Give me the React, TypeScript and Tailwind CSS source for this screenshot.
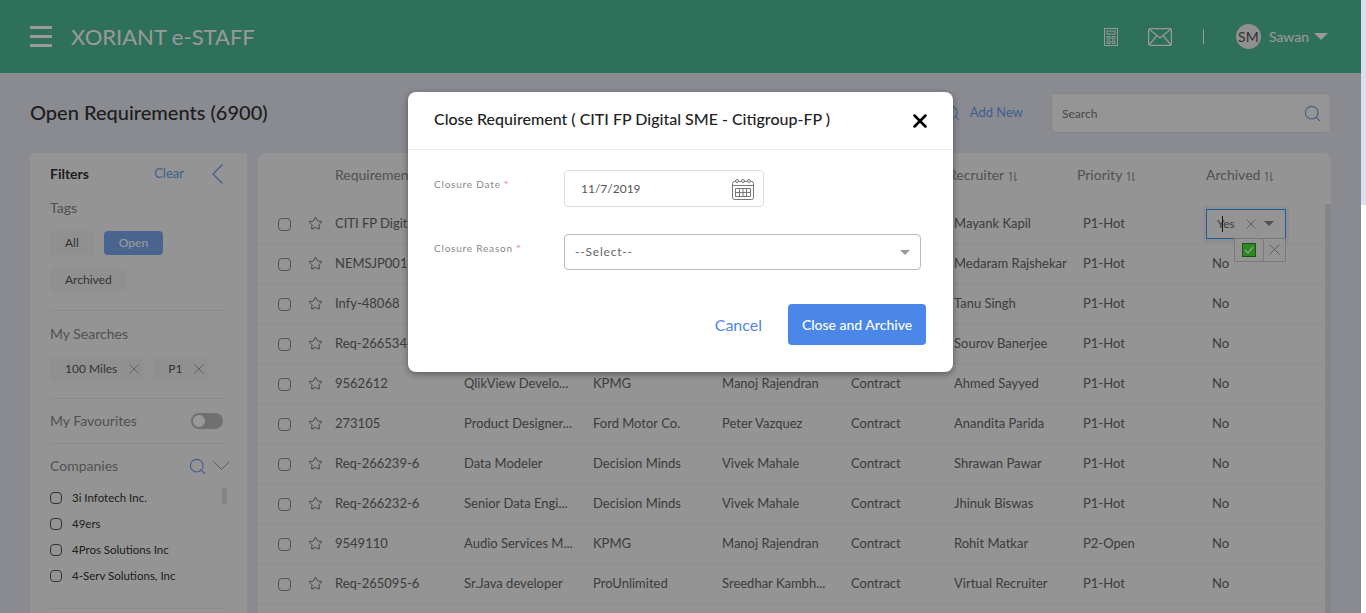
import { Search, X, Star } from "lucide-react";

const rows = [
  ["CITI FP Digital SME", "", "", "", "", "Mayank Kapil", "P1-Hot", "Yes"],
  ["NEMSJP001", "", "", "", "", "Medaram Rajshekar", "P1-Hot", "No"],
  ["Infy-48068", "", "", "", "", "Tanu Singh", "P1-Hot", "No"],
  ["Req-266534", "", "", "", "", "Sourov Banerjee", "P1-Hot", "No"],
  ["9562612", "QlikView Develo...", "KPMG", "Manoj Rajendran", "Contract", "Ahmed Sayyed", "P1-Hot", "No"],
  ["273105", "Product Designer...", "Ford Motor Co.", "Peter Vazquez", "Contract", "Anandita Parida", "P1-Hot", "No"],
  ["Req-266239-6", "Data Modeler", "Decision Minds", "Vivek Mahale", "Contract", "Shrawan Pawar", "P1-Hot", "No"],
  ["Req-266232-6", "Senior Data Engi...", "Decision Minds", "Vivek Mahale", "Contract", "Jhinuk Biswas", "P1-Hot", "No"],
  ["9549110", "Audio Services M...", "KPMG", "Manoj Rajendran", "Contract", "Rohit Matkar", "P2-Open", "No"],
  ["Req-265095-6", "Sr.Java developer", "ProUnlimited", "Sreedhar Kambh...", "Contract", "Virtual Recruiter", "P1-Hot", "No"],
];

const companies = ["3i Infotech Inc.", "49ers", "4Pros Solutions Inc", "4-Serv Solutions, Inc"];

const SortIcon = () => (
  <svg width="10" height="11" viewBox="0 0 10 11" fill="none" stroke="currentColor" strokeWidth="1" className="inline-block ml-1">
    <path d="M3 10V1L1 3M7 1v9l2-2" />
  </svg>
);

const Chip = ({ label, active }: { label: string; active?: boolean }) => (
  <span className={`h-6 px-[15px] rounded text-xs flex items-center ${active ? "bg-[#7ba7ee] text-white font-medium" : "bg-[#f0f0f0] text-[#555]"}`}>
    {label}
  </span>
);

const SearchChip = ({ label }: { label: string }) => (
  <span className="h-6 pl-[15px] pr-[4px] rounded bg-[#f0f0f0] text-[#555] text-xs flex items-center gap-3">
    {label}
    <X size={18} strokeWidth={0.8} className="-mx-[4px] text-[#777]" />
  </span>
);

const CalendarIcon = () => (
  <svg width="22" height="22" viewBox="0 0 22 22" fill="none" stroke="#777" strokeWidth="1">
    <rect x="0.5" y="3.5" width="21" height="18" rx="2" />
    <path d="M1 7.5h20" />
    <circle cx="5" cy="3" r="1.5" fill="white" />
    <circle cx="11" cy="3" r="1.5" fill="white" />
    <circle cx="17" cy="3" r="1.5" fill="white" />
    <path d="M3.5 10.5h15v8h-15zM3.5 14.5h15M7.5 10.5v8M11 10.5v8M14.5 10.5v8" />
  </svg>
);

export default function App() {
  return (
    <div className="relative h-screen overflow-hidden bg-white text-[#333] flex" style={{ fontFamily: "Lato, sans-serif" }}>
      <div className="flex-1 h-screen bg-[#e6e8f0]">
        <header className="h-[73px] bg-[#4ebb95] flex items-center pl-[30px] pr-[33px] text-white">
          <div className="w-[22px] flex flex-col gap-[6px]">
            <span className="h-[3px] bg-white" />
            <span className="h-[3px] bg-white" />
            <span className="h-[3px] bg-white" />
          </div>
          <span className="ml-[19px] text-[22px]">XORIANT e-STAFF</span>
          <div className="ml-auto flex items-center">
            <svg width="14" height="18" viewBox="0 0 14 18" fill="none" stroke="white" strokeWidth="1">
              <rect x="0.5" y="0.5" width="13" height="17" />
              <rect x="3" y="3" width="8" height="3" />
              <path d="M3 8.5h3v2.5H3zM8 8.5h3v2.5H8zM3 13h3v2.5H3zM8 13h3v2.5H8z" />
            </svg>
            <svg width="24" height="18" viewBox="0 0 24 18" fill="none" stroke="white" strokeWidth="1.2" className="ml-[30px]">
              <rect x="0.6" y="0.6" width="22.8" height="16.8" rx="2" />
              <path d="M1 1l11 9 11-9M1 17l8-9.5M23 17l-8-9.5" />
            </svg>
            <span className="ml-[31px] w-px h-[15px] bg-white" />
            <span className="ml-[32px] w-[25px] h-[25px] rounded-full bg-[#f0f0f0] text-[#555] text-sm flex items-center justify-center">SM</span>
            <span className="ml-2 text-sm">Sawan</span>
            <span className="ml-[5px] border-x-[7px] border-x-transparent border-t-[7px] border-t-white" />
          </div>
        </header>

        <div className="h-[80px] pl-[30px] pr-[30px] flex items-center justify-between">
          <h1 className="text-xl font-medium -mt-[2px]">Open Requirements (6900)</h1>
          <div className="flex items-center">
            <Search size={18} strokeWidth={1.4} className="text-[#6a9cf0]" />
            <span className="ml-[9px] text-[#6a9cf0] text-[13px]">Add New</span>
            <div className="ml-[28px] w-[280px] h-[40px] bg-[#f8f8f8] border border-[#ddd] rounded flex items-center justify-between pl-[10px] pr-[8px]">
              <span className="text-xs text-[#777] pt-px">Search</span>
              <Search size={19} strokeWidth={1.4} className="text-[#6a9cf0]" />
            </div>
          </div>
        </div>

        <div className="flex gap-[11px] pl-[30px] pr-[30px]">
          <aside className="w-[217px] shrink-0 h-[470px] bg-[#f7f7f7] rounded-t pl-[20px] pr-[20px]">
            <div className="h-[42px] flex items-center">
              <span className="text-sm font-bold">Filters</span>
              <span className="ml-auto text-[#6a9cf0] text-[13px]">Clear</span>
              <svg width="11" height="20" viewBox="0 0 11 20" fill="none" stroke="#6a9cf0" strokeWidth="1.2" className="ml-[28px] mr-[4px]">
                <path d="M10.5 0.5L1 10l9.5 9.5" />
              </svg>
            </div>
            <div className="mt-px text-sm text-[#888] leading-[24px]">Tags</div>
            <div className="mt-[11px] flex gap-[10px]">
              <Chip label="All" />
              <Chip label="Open" active />
            </div>
            <div className="mt-[13px] flex">
              <Chip label="Archived" />
            </div>
            <div className="mt-[18px] border-t border-[#e8e8e8] pt-[13px] text-sm text-[#888] leading-[20px]">My Searches</div>
            <div className="mt-[13px] flex gap-[10px]">
              <SearchChip label="100 Miles" />
              <SearchChip label="P1" />
            </div>
            <div className="mt-[17px] border-t border-[#e8e8e8] h-[45px] flex items-center justify-between text-sm text-[#888]">
              My Favourites
              <span className="mr-[4px] w-[32px] h-[16px] rounded-full bg-[#bbb] flex items-center pl-[2px]">
                <span className="w-[12px] h-[12px] rounded-full bg-white" />
              </span>
            </div>
            <div className="border-t border-[#e8e8e8] pt-[12px] h-[33px] flex items-center text-sm text-[#888] leading-[20px]">
              Companies
              <Search size={19} strokeWidth={1.4} className="ml-auto text-[#6a9cf0]" />
              <svg width="17" height="10" viewBox="0 0 17 10" fill="none" stroke="#999" strokeWidth="1" className="ml-[6px] -mr-[3px]">
                <path d="M0.5 0.5l8 8 8-8" />
              </svg>
            </div>
            <div className="relative mt-[9px]">
              <span className="absolute right-0 top-[3px] w-[5px] h-[16px] bg-[#dde0ea]" />
              {companies.map((c) => (
                <div key={c} className="h-[26px] flex items-center gap-[10px] text-[11.5px]">
                  <span className="w-3 h-3 border border-[#555] rounded-sm" />
                  {c}
                </div>
              ))}
            </div>
            <div className="mt-[19px] border-t border-[#e8e8e8]" />
          </aside>

          <section className="relative flex-1 h-[470px] bg-[#f7f7f7] rounded-t-lg">
            <div className="h-[44px] mb-[7px] grid grid-cols-[77px_129px_129px_129px_129px_103px_129px_123px_1fr] items-center text-sm text-[#888]">
              <span />
              <span>Requirement</span>
              <span />
              <span />
              <span />
              <span />
              <span className="-ml-[6px]">Recruiter<SortIcon /></span>
              <span className="-ml-[6px]">Priority<SortIcon /></span>
              <span>Archived<SortIcon /></span>
            </div>
            <span className="absolute right-0 top-[51px] bottom-0 w-[6px] bg-[#dde0ea]" />
            {rows.map((r, i) => (
              <div key={r[0]} className="relative h-[40px] grid grid-cols-[77px_129px_129px_129px_129px_103px_129px_123px_1fr] items-center text-[13px] text-[#666] border-b border-[#ececec] mr-[6px]">
                <div className="flex items-center pl-[20px]">
                  <span className="mt-[2px] w-[13px] h-[13px] border border-[#888] rounded-sm" />
                  <Star size={15} strokeWidth={1.3} className="ml-[17px] text-[#555]" />
                </div>
                {r.slice(0, 5).map((v, j) => (
                  <span key={j} className="whitespace-nowrap overflow-hidden">{v}</span>
                ))}
                <span className="whitespace-nowrap">{r[5]}</span>
                <span>{r[6]}</span>
                {i === 0 ? (
                  <div className="relative w-[80px] h-[30px] bg-[#f7f7f7] border border-[#3399ff] flex items-center pl-[10px] outline-[3px] outline-[#ecedf2]">
                    <span className="relative text-xs">
                      Yes
                      <span className="absolute left-[5px] top-0 bottom-0 w-px bg-[#222]" />
                    </span>
                    <X size={16} strokeWidth={1.2} className="ml-[8px] -mx-[3px] text-[#888]" />
                    <span className="ml-[8px] border-x-[5px] border-x-transparent border-t-[5px] border-t-[#888]" />
                    <div className="absolute top-[28px] right-[-1px] h-[24px] w-[52px] bg-[#f7f7f7] border border-[#ccc] flex">
                      <span className="w-[29px] border-r border-[#ccc] flex items-center justify-center">
                        <span className="w-[14px] h-[14px] bg-[#48e83a] border border-[#2b8a24] flex items-center justify-center">
                          <svg width="10" height="8" viewBox="0 0 10 8" fill="none" stroke="white" strokeWidth="1.2"><path d="M1 4l3 3 5-6" /></svg>
                        </span>
                      </span>
                      <span className="flex-1 flex items-center justify-center"><X size={19} strokeWidth={0.8} className="text-[#777]" /></span>
                    </div>
                  </div>
                ) : (
                  <span className="pl-[6px]">{r[7]}</span>
                )}
              </div>
            ))}
          </section>
        </div>
      </div>

      <div className="w-[5px] shrink-0">
        <div className="h-[205px] bg-[#dcdfee]" />
      </div>

      <div className="absolute top-0 left-0 bottom-0 right-[5px] bg-black/40" />

      <div className="absolute left-[408px] top-[92px] w-[545px] h-[280px] bg-white rounded-lg shadow-[0_2px_6px_rgba(0,0,0,0.4)]">
        <div className="h-[58px] border-b border-[#f0e8e8] flex items-center pl-[26px] pr-[26px]">
          <span className="text-base font-medium text-[#222] -mt-[3px]">Close Requirement ( CITI FP Digital SME - Citigroup-FP )</span>
          <X size={22} strokeWidth={2.8} className="ml-auto -mr-[4px] text-black" />
        </div>
        <div className="pl-[26px] pr-[32px] pt-[20px]">
          <div className="flex">
            <span className="w-[130px] text-[10px] tracking-[0.8px] text-[#888] pt-[7px]">Closure Date <span className="text-red-400">*</span></span>
            <div className="w-[200px] h-[37px] border border-[#ddd] rounded flex items-center justify-between pl-[16px] pr-[9px] text-xs text-[#555]">
              <span className="pt-px">11/7/2019</span>
              <CalendarIcon />
            </div>
          </div>
          <div className="flex mt-[27px]">
            <span className="w-[130px] text-[10px] tracking-[0.8px] text-[#888] pt-[7px]">Closure Reason <span className="text-red-400">*</span></span>
            <div className="flex-1 h-[36px] border border-[#bbb] rounded-sm flex items-center justify-between pl-[10px] pr-[10px] text-xs tracking-[0.8px] text-[#666]">
              --Select--
              <span className="border-x-[5px] border-x-transparent border-t-[5px] border-t-[#999]" />
            </div>
          </div>
          <div className="mt-[34px] -mr-[5px] flex justify-end items-center">
            <span className="text-[#4a87e8] text-base">Cancel</span>
            <span className="ml-[26px] w-[138px] h-[41px] rounded-sm bg-[#4a87e8] text-white text-sm font-medium flex items-center justify-center">Close and Archive</span>
          </div>
        </div>
      </div>
    </div>
  );
}
